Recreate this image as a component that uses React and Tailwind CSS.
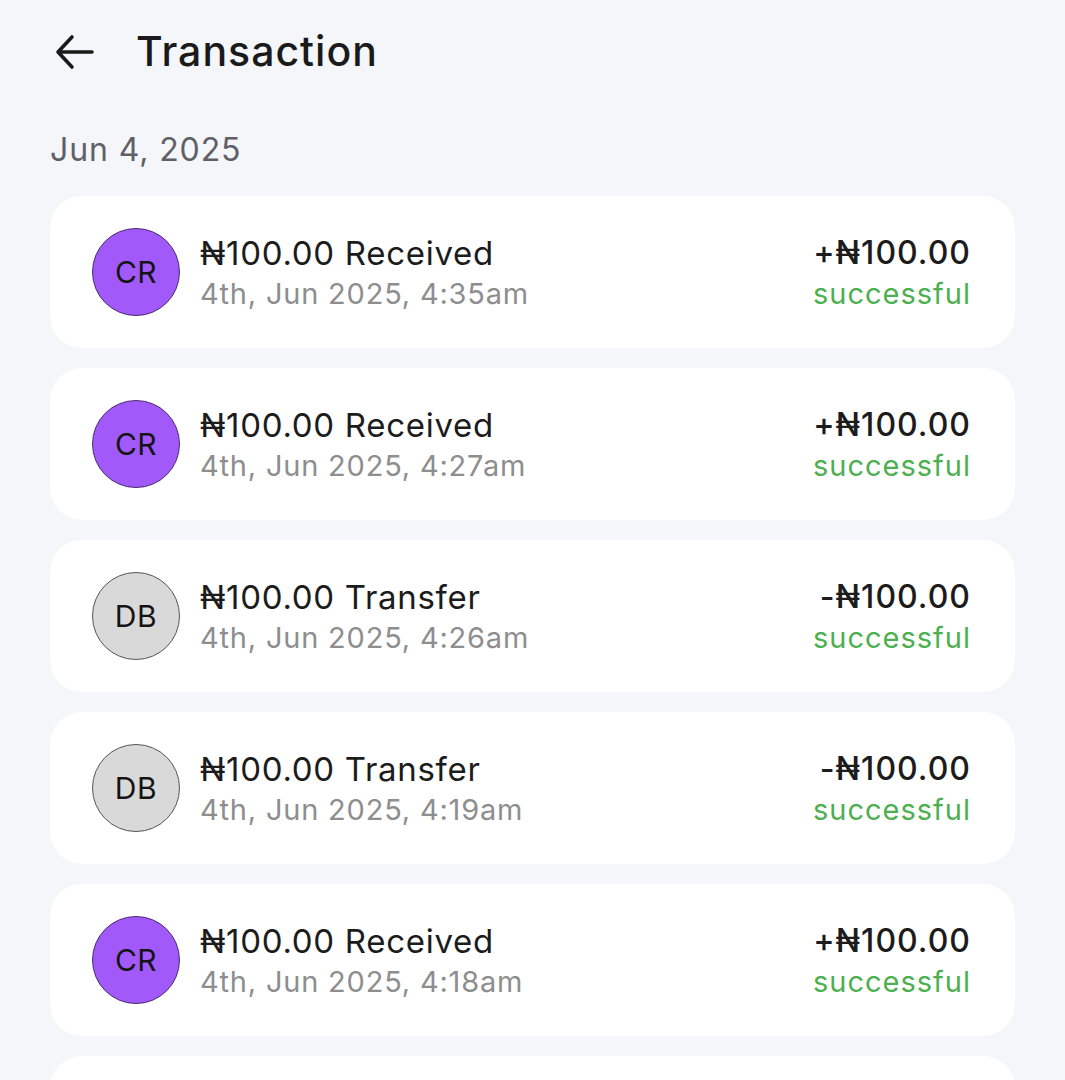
import React from "react";

const items = [
  { type: "CR", title: "₦100.00 Received", time: "4th, Jun 2025, 4:35am", amount: "+₦100.00" },
  { type: "CR", title: "₦100.00 Received", time: "4th, Jun 2025, 4:27am", amount: "+₦100.00" },
  { type: "DB", title: "₦100.00 Transfer", time: "4th, Jun 2025, 4:26am", amount: "-₦100.00" },
  { type: "DB", title: "₦100.00 Transfer", time: "4th, Jun 2025, 4:19am", amount: "-₦100.00" },
  { type: "CR", title: "₦100.00 Received", time: "4th, Jun 2025, 4:18am", amount: "+₦100.00" },
];

function Avatar({ type }) {
  const cls =
    type === "CR"
      ? "bg-[#a259fa] border-[#4a2a70]"
      : "bg-[#d9d9d9] border-[#555555]";
  return (
    <div
      className={`w-[88px] h-[88px] rounded-full border flex items-center justify-center shrink-0 text-[30px] tracking-[0.5px] text-[#141414] ${cls}`}
    >
      {type}
    </div>
  );
}

export default function App() {
  return (
    <div
      className="w-[1065px] h-[1080px] overflow-hidden bg-[#f5f6fa]"
      style={{ fontFamily: "Inter, 'Noto Sans', sans-serif" }}
    >
      <div className="flex items-center h-[104px] pl-[55px]">
        <svg width="40" height="36" viewBox="0 0 40 36" fill="none" stroke="#1a1a1a" strokeWidth="3.6" strokeLinecap="round" strokeLinejoin="round">
          <path d="M37 18H3M17 3L3 18l14 15" />
        </svg>
        <div className="ml-[41px] text-[41px] font-medium text-[#1a1a1a] tracking-[1px]">Transaction</div>
      </div>
      <div className="px-[50px] mt-[24px] text-[32px] tracking-[0.9px] text-[#5f6066] leading-[44px]">Jun 4, 2025</div>
      <div className="px-[50px] mt-[24px] flex flex-col gap-[20px]">
        {items.concat([{ type: "CR", title: "", time: "", amount: "", empty: true }]).map((it, i) => (
          <div key={i} className="h-[152px] shrink-0 bg-white rounded-[32px] flex items-center pl-[42px] pr-[44px]">
            {!it.empty && (
              <>
                <Avatar type={it.type} />
                <div className="ml-[20px] flex flex-col">
                  <div className="text-[33px] tracking-[0.7px] leading-[42px] text-[#1c1c1c] mt-[2px]">{it.title}</div>
                  <div className="text-[29px] tracking-[0.8px] leading-[40px] text-[#8e8e8e]">{it.time}</div>
                </div>
                <div className="ml-auto flex flex-col items-end">
                  <div className="text-[32px] tracking-[1px] leading-[42px] font-medium text-[#1c1c1c] mt-[2px]">{it.amount}</div>
                  <div className="text-[29px] tracking-[1px] leading-[40px] text-[#4caf50]">successful</div>
                </div>
              </>
            )}
          </div>
        ))}
      </div>
    </div>
  );
}
